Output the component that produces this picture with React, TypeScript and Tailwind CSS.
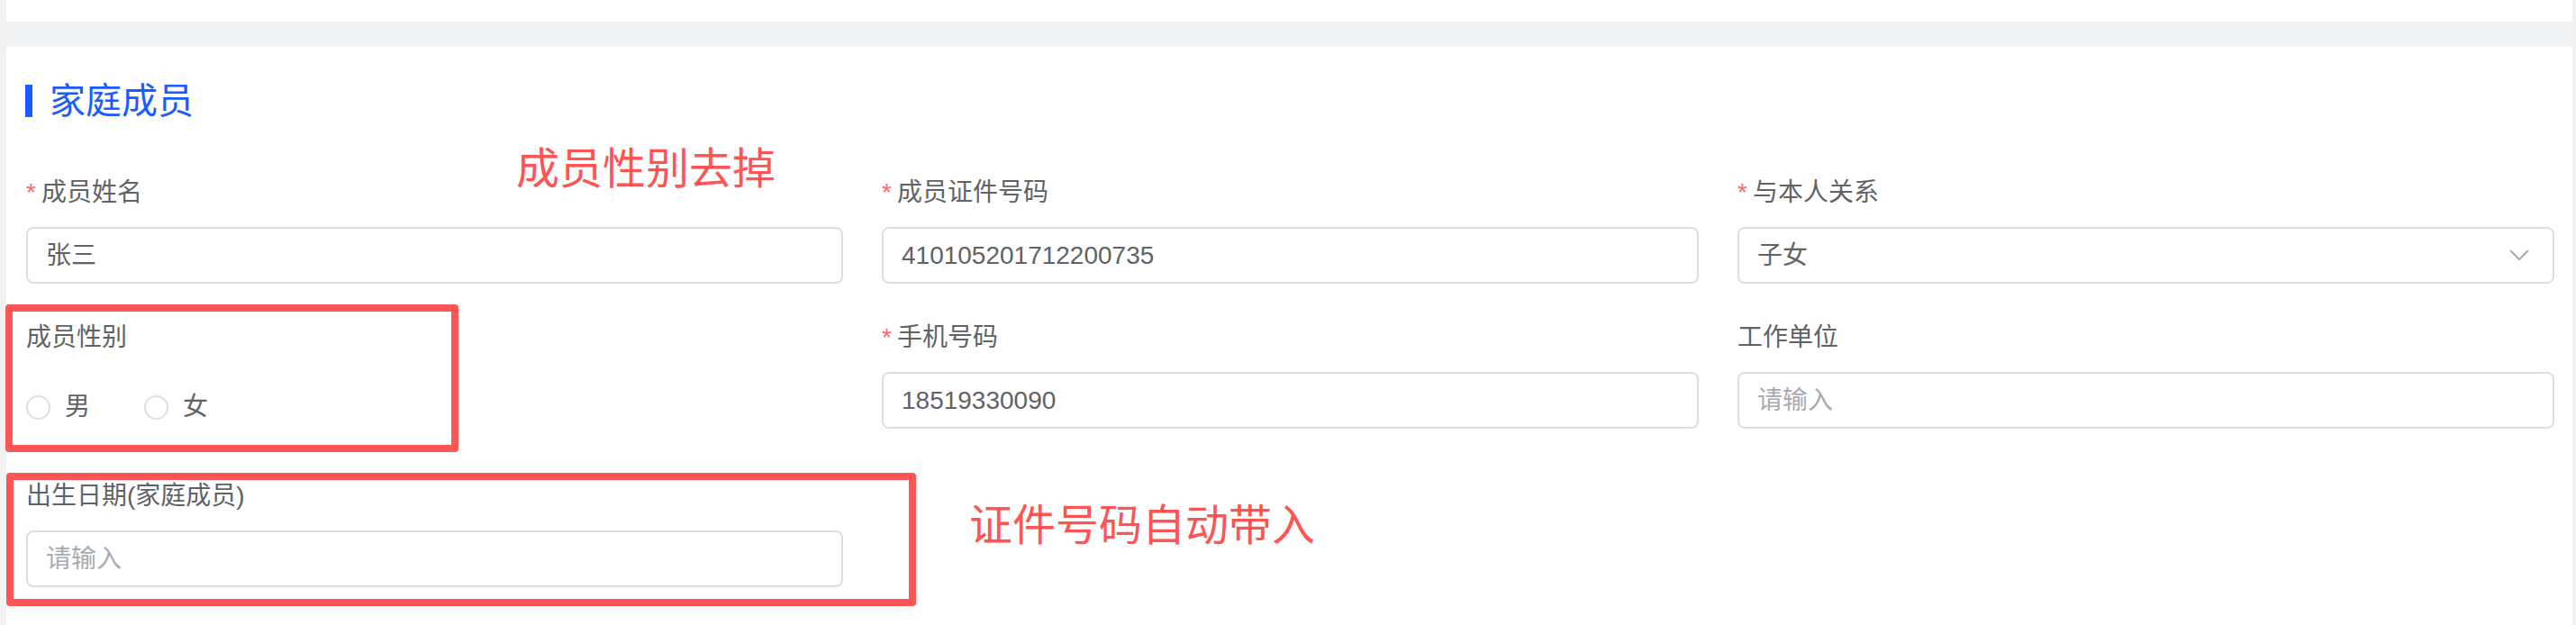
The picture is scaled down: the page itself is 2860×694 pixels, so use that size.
import * as React from "react";

const font = "font-['Liberation_Sans','Noto_Sans_CJK_SC',sans-serif]";

function Label({ text, required }: { text: string; required?: boolean }) {
  return (
    <div className="mb-[18px] flex h-[40px] items-center text-[28px] leading-[40px] text-[#606266]">
      {required && <span className="mr-[6px] text-[#f56c6c]">*</span>}
      <span>{text}</span>
    </div>
  );
}

function TextInput({ value, placeholder }: { value?: string; placeholder?: string }) {
  return (
    <div className="flex h-[63px] items-center rounded-[8px] border-2 border-[#dcdfe6] bg-white px-[20px] text-[28px]">
      {value ? (
        <span className="text-[#606266]">{value}</span>
      ) : (
        <span className="text-[#a8abb2]">{placeholder}</span>
      )}
    </div>
  );
}

function SelectInput({ value }: { value: string }) {
  return (
    <div className="flex h-[63px] items-center justify-between rounded-[8px] border-2 border-[#dcdfe6] bg-white pl-[20px] pr-[26px] text-[28px]">
      <span className="text-[#606266]">{value}</span>
      <svg width="22" height="13" viewBox="0 0 22 13" fill="none">
        <polyline points="1,1 11,11 21,1" stroke="#a8abb2" strokeWidth="2" />
      </svg>
    </div>
  );
}

function Radio({ label }: { label: string }) {
  return (
    <label className="mr-[60px] flex items-center">
      <span className="h-[27px] w-[27px] rounded-full border-2 border-[#dcdfe6] bg-white" />
      <span className="ml-[16px] text-[28px] text-[#606266]">{label}</span>
    </label>
  );
}

export default function App() {
  return (
    <div className={`relative flex h-[694px] w-[2860px] overflow-hidden bg-white ${font}`}>
      <div className="w-[7px] shrink-0 bg-[#f2f2f2]" />

      <div className="flex min-w-0 flex-1 flex-col">
        <div className="h-[24px] bg-white" />
        <div className="h-[28px] bg-[#f2f3f5]" />

        <section className="flex-1 bg-white">
          <div className="mt-[42px] flex h-[36px] items-center pl-[21px]">
            <span className="h-[36px] w-[8px] bg-[#1a5cff]" />
            <h2 className="ml-[19px] text-[40px] leading-none text-[#1a5cff]">家庭成员</h2>
          </div>

          <div className="mt-[64px] grid grid-cols-[907px_907px_907px] items-start gap-x-[43px] gap-y-[40px] pl-[22px]">
            <div>
              <Label text="成员姓名" required />
              <TextInput value="张三" />
            </div>
            <div>
              <Label text="成员证件号码" required />
              <TextInput value="410105201712200735" />
            </div>
            <div>
              <Label text="与本人关系" required />
              <SelectInput value="子女" />
            </div>

            <div>
              <Label text="成员性别" />
              <div className="flex h-[78px] items-center">
                <Radio label="男" />
                <Radio label="女" />
              </div>
            </div>
            <div>
              <Label text="手机号码" required />
              <TextInput value="18519330090" />
            </div>
            <div>
              <Label text="工作单位" />
              <TextInput placeholder="请输入" />
            </div>

            <div>
              <Label text="出生日期(家庭成员)" />
              <TextInput placeholder="请输入" />
            </div>
          </div>
        </section>
      </div>

      <div className="w-[4px] shrink-0 bg-[#f0f0f0]" />

      {/* review annotations drawn over the form */}
      <div className="pointer-events-none absolute left-[6px] top-[338px] h-[164px] w-[503px] rounded-[4px] border-[8px] border-[#fe5454]" />
      <div className="pointer-events-none absolute left-[7px] top-[525px] h-[148px] w-[1010px] rounded-[4px] border-[8px] border-[#fe5454]" />
      <div className="absolute left-[573px] top-[162px] text-[48px] leading-[52px] text-[#fe5454]">成员性别去掉</div>
      <div className="absolute left-[1076px] top-[558px] text-[48px] leading-[52px] text-[#fe5454]">证件号码自动带入</div>
    </div>
  );
}
